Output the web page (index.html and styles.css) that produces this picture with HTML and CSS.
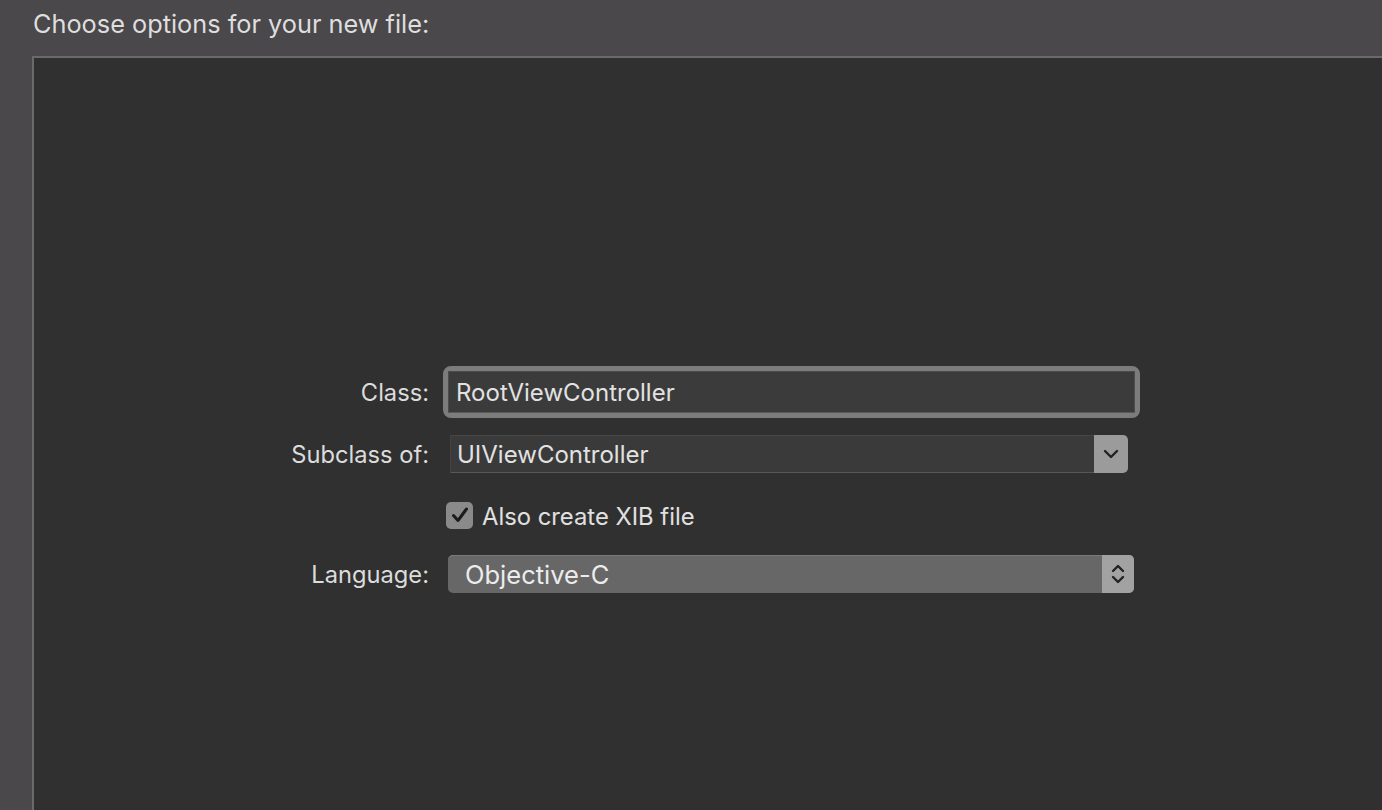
FILE: index.html
```html
<!DOCTYPE html>
<html>
<head>
<meta charset="utf-8">
<link rel="stylesheet" href="styles.css">
</head>
<body>
<div class="window">
  <div class="title">Choose options for your new file:</div>
  <div class="panel">
    <div class="form">
      <div class="label row-class">Class:</div>
      <div class="ctrl row-class">
        <div class="textfield-ring"><div class="textfield">RootViewController</div></div>
      </div>

      <div class="label row-sub">Subclass of:</div>
      <div class="ctrl row-sub">
        <div class="combo">
          <div class="combo-text">UIViewController</div>
          <div class="combo-btn">
            <svg width="16" height="10" viewBox="0 0 16 10"><path d="M2 2 L8 8 L14 2" fill="none" stroke="#222" stroke-width="2.4" stroke-linecap="round" stroke-linejoin="round"/></svg>
          </div>
        </div>
      </div>

      <div class="label row-check"></div>
      <div class="ctrl row-check">
        <div class="checkwrap">
          <div class="checkbox">
            <svg width="20" height="18" viewBox="0 0 20 18"><path d="M3.5 9.5 L8 14.5 L16.5 3" fill="none" stroke="#1c1c1c" stroke-width="3" stroke-linecap="round" stroke-linejoin="round"/></svg>
          </div>
          <span class="checklabel">Also create XIB file</span>
        </div>
      </div>

      <div class="label row-lang">Language:</div>
      <div class="ctrl row-lang">
        <div class="popup">
          <div class="popup-text">Objective-C</div>
          <div class="popup-btn">
            <svg width="16" height="24" viewBox="0 0 16 24"><path d="M3 9 L8 4 L13 9" fill="none" stroke="#222" stroke-width="2.4" stroke-linecap="round" stroke-linejoin="round"/><path d="M3 15 L8 20 L13 15" fill="none" stroke="#222" stroke-width="2.4" stroke-linecap="round" stroke-linejoin="round"/></svg>
          </div>
        </div>
      </div>
    </div>
  </div>
</div>
</body>
</html>
```

FILE: styles.css
```css
html, body {
  margin: 0;
  padding: 0;
  height: 100%;
  overflow: hidden;
}
body {
  background: #4a484b;
  font-family: Inter, "Liberation Sans", sans-serif;
  color: #dedede;
}
.window {
  height: 810px;
  display: flex;
  flex-direction: column;
}
.title {
  font-size: 25.3px;
  padding: 8px 0 0 33px;
  height: 56px;
  box-sizing: border-box;
}
.panel {
  flex: 1;
  margin-left: 32px;
  background: #303030;
  border-top: 2px solid #6a6a6a;
  border-left: 2px solid #6a6a6a;
}
.form {
  display: grid;
  grid-template-columns: 395px 730px;
  column-gap: 0;
  padding-top: 308px;
}
.label {
  font-size: 23.7px;
  display: flex;
  align-items: center;
  justify-content: flex-end;
  color: #dcdcdc;
}
.ctrl {
  display: flex;
  align-items: center;
}
.row-class { height: 52px; }
.row-sub { height: 38px; margin-top: 17px; }
.row-check { height: 28px; margin-top: 28px; }
.row-lang { height: 38px; margin-top: 26px; }

.textfield-ring {
  margin-left: 14px;
  width: 697px;
  height: 52px;
  box-sizing: border-box;
  border: 5px solid #7c7c7c;
  border-radius: 8px;
  background: #7c7c7c;
}
.textfield {
  height: 100%;
  box-sizing: border-box;
  background: #3b3b3b;
  border: 1px solid #4c4c4c;
  border-bottom-color: #5a5a5a;
  font-size: 24px;
  padding-left: 7px;
  display: flex;
  align-items: center;
  color: #e2e2e2;
}
.combo {
  margin-left: 21px;
  width: 678px;
  height: 38px;
  display: flex;
}
.combo-text {
  flex: 1;
  background: #3a3a3a;
  border-top: 1px solid #464646;
  border-bottom: 1px solid #575757;
  border-left: 1px solid #434343;
  font-size: 24px;
  padding-left: 6px;
  display: flex;
  align-items: center;
  color: #e2e2e2;
}
.combo-btn {
  width: 34px;
  background: #9b9b9b;
  border-radius: 0 5px 5px 0;
  display: flex;
  align-items: center;
  justify-content: center;
}
.checkwrap {
  margin-left: 17px;
  display: flex;
  align-items: center;
}
.checkbox {
  width: 27px;
  height: 27px;
  border-radius: 5px;
  background: #8a8a8a;
  display: flex;
  align-items: center;
  justify-content: center;
}
.checklabel {
  font-size: 23.8px;
  margin-left: 9px;
  margin-top: 2px;
  color: #e0e0e0;
}
.popup {
  margin-left: 19px;
  width: 686px;
  height: 38px;
  display: flex;
  border-radius: 5px;
  overflow: hidden;
  background: #676767;
  box-shadow: inset 0 1px 0 #7a7a7a;
}
.popup-text {
  flex: 1;
  font-size: 25.5px;
  padding-left: 17px;
  display: flex;
  align-items: center;
  color: #ececec;
}
.popup-btn {
  width: 32px;
  background: #a2a2a2;
  display: flex;
  align-items: center;
  justify-content: center;
}
```
